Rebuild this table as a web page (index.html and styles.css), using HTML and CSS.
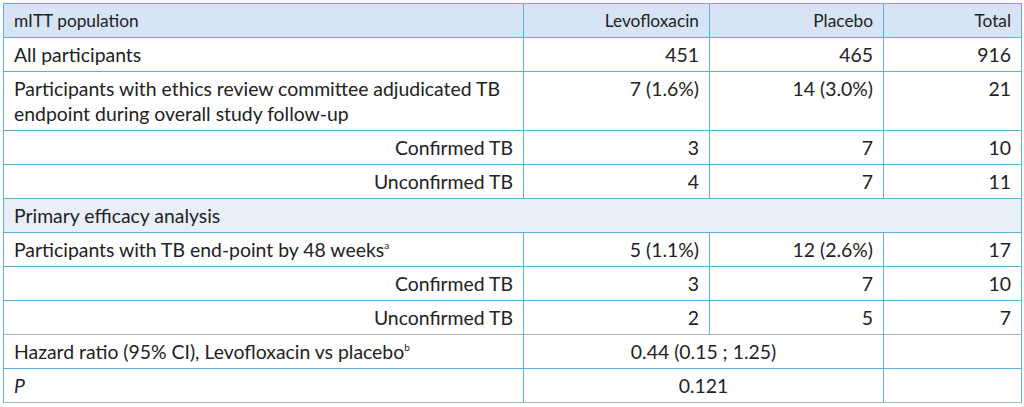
FILE: index.html
```html
<!DOCTYPE html>
<html>
<head>
<meta charset="utf-8">
<link rel="stylesheet" href="styles.css">
</head>
<body>
<table class="tbl">
  <colgroup>
    <col class="c1"><col class="c2"><col class="c3"><col class="c4">
  </colgroup>
  <thead>
    <tr class="head">
      <th class="left">mITT population</th>
      <th>Levofloxacin</th>
      <th>Placebo</th>
      <th>Total</th>
    </tr>
  </thead>
  <tbody>
    <tr>
      <td class="left">All participants</td>
      <td>451</td><td>465</td><td>916</td>
    </tr>
    <tr class="top">
      <td class="left">Participants with ethics review committee adjudicated TB endpoint during overall study follow-up</td>
      <td>7 (1.6%)</td><td>14 (3.0%)</td><td>21</td>
    </tr>
    <tr>
      <td>Confirmed TB</td>
      <td>3</td><td>7</td><td>10</td>
    </tr>
    <tr>
      <td>Unconfirmed TB</td>
      <td>4</td><td>7</td><td>11</td>
    </tr>
    <tr class="section">
      <td class="left" colspan="4">Primary efficacy analysis</td>
    </tr>
    <tr>
      <td class="left">Participants with TB end-point by 48 weeks<sup>a</sup></td>
      <td>5 (1.1%)</td><td>12 (2.6%)</td><td>17</td>
    </tr>
    <tr>
      <td>Confirmed TB</td>
      <td>3</td><td>7</td><td>10</td>
    </tr>
    <tr class="grayb">
      <td>Unconfirmed TB</td>
      <td>2</td><td>5</td><td>7</td>
    </tr>
    <tr>
      <td class="left">Hazard ratio (95% CI), Levofloxacin vs placebo<sup>b</sup></td>
      <td class="center" colspan="2">0.44 (0.15 ; 1.25)</td>
      <td></td>
    </tr>
    <tr class="grayb">
      <td class="left"><i>P</i></td>
      <td class="center" colspan="2">0.121</td>
      <td></td>
    </tr>
  </tbody>
</table>
</body>
</html>
```

FILE: styles.css
```css
html, body {
  margin: 0;
  padding: 0;
  background: #ffffff;
}
body {
  padding: 3px;
  font-family: Lato, "Open Sans", sans-serif;
  color: #222222;
}
.tbl {
  width: 1018px;
  border-collapse: separate;
  border-spacing: 0;
  table-layout: fixed;
  border-top: 1px solid #5cb2df;
  border-left: 1px solid #5cb2df;
}
.c1 { width: 520px; }
.c2 { width: 186px; }
.c3 { width: 174px; }
.c4 { width: 138px; }
.tbl th,
.tbl td {
  border-right: 1px solid #5cb2df;
  border-bottom: 1px solid #5cb2df;
  padding: 4px 10px;
  line-height: 25px;
  font-size: 19.4px;
  text-align: right;
  vertical-align: middle;
}
.tbl th {
  background: #d6e4f5;
  font-weight: normal;
  font-size: 17.3px;
}
.tbl .left { text-align: left; }
.tbl .center { text-align: center; }
.top td { vertical-align: top; }
.section td { background: #e8eff9; }
.grayb td { border-bottom-color: #a9b4be; }
sup {
  font-size: 10px;
  line-height: 0;
  vertical-align: 8px;
}
```
